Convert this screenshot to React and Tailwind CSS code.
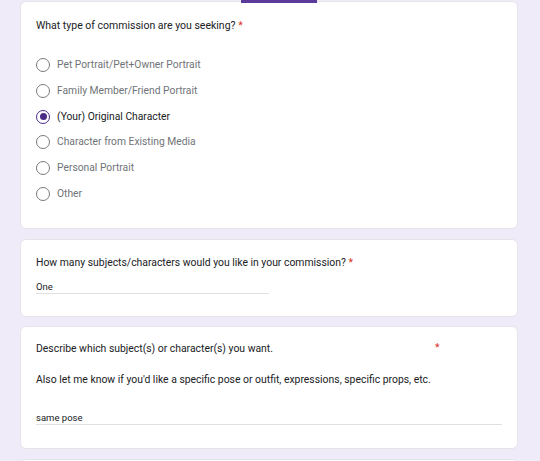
import React from "react";

const font = { fontFamily: "Roboto, 'Liberation Sans', sans-serif" };

function Radio({ checked }) {
  return (
    <span
      className={`flex h-[14px] w-[14px] shrink-0 items-center justify-center rounded-full border-[1.5px] ${
        checked ? "border-[#4b2a86]" : "border-[#7a7a7a]"
      }`}
    >
      {checked && <span className="h-[7px] w-[7px] rounded-full bg-[#4b2a86]" />}
    </span>
  );
}

const options = [
  "Pet Portrait/Pet+Owner Portrait",
  "Family Member/Friend Portrait",
  "(Your) Original Character",
  "Character from Existing Media",
  "Personal Portrait",
  "Other",
];

export default function App() {
  return (
    <div className="h-[461px] w-[540px] overflow-hidden bg-[#f0ebf8]" style={font}>
      <div className="flex flex-col pl-[20px] pr-[22px] pt-[1px]">
        {/* Card 1 */}
        <div className="relative h-[228px] rounded-[6px] border border-[#e6e3ea] bg-white pl-[15px] pt-[17px]">
          <div className="absolute left-[220px] top-[-2px] h-[3px] w-[76px] bg-[#5b3a9a]" />
          <div className="text-[10.5px] leading-[14px] text-[#202124]">
            What type of commission are you seeking? <span className="text-[#d93025]">*</span>
          </div>
          <div className="mt-[25px] flex flex-col gap-[11.8px]">
            {options.map((o, i) => (
              <div key={o} className="flex h-[14px] items-center gap-[7px]">
                <Radio checked={i === 2} />
                <span
                  className={`text-[10.3px] leading-[14px] ${
                    i === 2 ? "text-[#202124]" : "text-[#707478]"
                  }`}
                >
                  {o}
                </span>
              </div>
            ))}
          </div>
        </div>

        {/* Card 2 */}
        <div className="mt-[10px] h-[78px] rounded-[6px] border border-[#e6e3ea] bg-white pl-[15px] pt-[16px]">
          <div className="text-[10.4px] leading-[14px] text-[#202124]">
            How many subjects/characters would you like in your commission?{" "}
            <span className="text-[#d93025]">*</span>
          </div>
          <div className="mt-[11px] w-[233px] border-b border-[#e0e0e0] pb-[0px] text-[9.5px] leading-[12px] text-[#202124]">
            One
          </div>
        </div>

        {/* Card 3 */}
        <div className="mt-[9px] h-[123px] rounded-[6px] border border-[#e6e3ea] bg-white pl-[15px] pr-[15px] pt-[15px]">
          <div className="relative text-[10.4px] leading-[14px] text-[#202124]">
            Describe which subject(s) or character(s) you want.
            <span className="absolute left-[399px] top-[-1px] text-[#d93025]">*</span>
          </div>
          <div className="mt-[17px] text-[10.4px] leading-[14px] text-[#202124]">
            Also let me know if you'd like a specific pose or outfit, expressions, specific props, etc.
          </div>
          <div className="mt-[25px] border-b border-[#e0e0e0] pb-[0px] text-[9.5px] leading-[12px] text-[#202124]">
            same pose
          </div>
        </div>

        {/* Card 4 (cut off) */}
        <div className="mt-[10px] h-[60px] rounded-[6px] border border-[#e6e3ea] bg-white" />
      </div>
    </div>
  );
}
